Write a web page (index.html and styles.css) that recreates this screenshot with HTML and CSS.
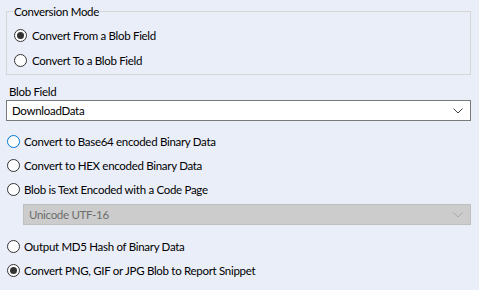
FILE: index.html
```html
<!DOCTYPE html>
<html lang="en">
<head>
    <meta charset="UTF-8">
    <title>Blob Conversion</title>
    <link rel="stylesheet" href="styles.css">
</head>
<body>
    <fieldset class="group">
        <legend>Conversion Mode</legend>
        <label class="radio"><span class="dot checked"></span>Convert From a Blob Field</label>
        <label class="radio"><span class="dot"></span>Convert To a Blob Field</label>
    </fieldset>

    <div class="field-label">Blob Field</div>
    <div class="combo">
        <span>DownloadData</span>
        <svg class="chevron" width="10" height="6" viewBox="0 0 10 6"><polyline points="0.5,0.5 5,5 9.5,0.5" fill="none" stroke="#404040" stroke-width="1"/></svg>
    </div>

    <div class="options">
        <label class="radio"><span class="dot focus"></span>Convert to Base64 encoded Binary Data</label>
        <label class="radio"><span class="dot"></span>Convert to HEX encoded Binary Data</label>
        <label class="radio"><span class="dot"></span>Blob is Text Encoded with a Code Page</label>
        <div class="combo disabled">
            <span>Unicode UTF-16</span>
            <svg class="chevron" width="10" height="6" viewBox="0 0 10 6"><polyline points="0.5,0.5 5,5 9.5,0.5" fill="none" stroke="#a8a8a8" stroke-width="1"/></svg>
        </div>
        <label class="radio"><span class="dot"></span>Output MD5 Hash of Binary Data</label>
        <label class="radio"><span class="dot checked"></span>Convert PNG, GIF or JPG Blob to Report Snippet</label>
    </div>
</body>
</html>
```

FILE: styles.css
```css
body {
    margin: 0;
    background: #eaeef9;
    font-family: 'Lato', 'Liberation Sans', sans-serif;
    font-size: 11.5px;
    letter-spacing: -0.3px;
    color: #000000;
    width: 479px;
    height: 290px;
    overflow: hidden;
}

.group {
    margin: 4px 8px 0 6px;
    padding: 4px 0 1px 7px;
    border: 1px solid #d6d6d6;
    min-inline-size: 0;
}

.group legend {
    padding: 0 1px;
    margin-left: -1px;
    line-height: 15px;
    height: 15px;
}

.radio {
    display: flex;
    align-items: center;
    gap: 5px;
    height: 25px;
    line-height: 15px;
    white-space: nowrap;
}

.dot {
    width: 13px;
    height: 13px;
    box-sizing: border-box;
    border: 1px solid #333333;
    border-radius: 50%;
    background: #ffffff;
    display: flex;
    align-items: center;
    justify-content: center;
    flex: none;
}

.dot.checked::after {
    content: '';
    width: 7px;
    height: 7px;
    border-radius: 50%;
    background: #333333;
}

.dot.focus {
    border-color: #0078d7;
}

.field-label {
    margin: 9px 0 0 9px;
    line-height: 15px;
    height: 15px;
}

.combo {
    margin: 1px 8px 0 6px;
    height: 21px;
    box-sizing: border-box;
    border: 1px solid #7a7a7a;
    background: #ffffff;
    display: flex;
    align-items: center;
    justify-content: space-between;
    padding: 0 7px 0 5px;
}

.combo.disabled {
    margin: 3px 8px 9px 16px;
    border-color: #bfbfbf;
    background: #cccccc;
    color: #6d6d6d;
}

.options {
    margin: 8px 0 0 7px;
}

.options .radio {
    height: 24px;
    gap: 4px;
}
```
